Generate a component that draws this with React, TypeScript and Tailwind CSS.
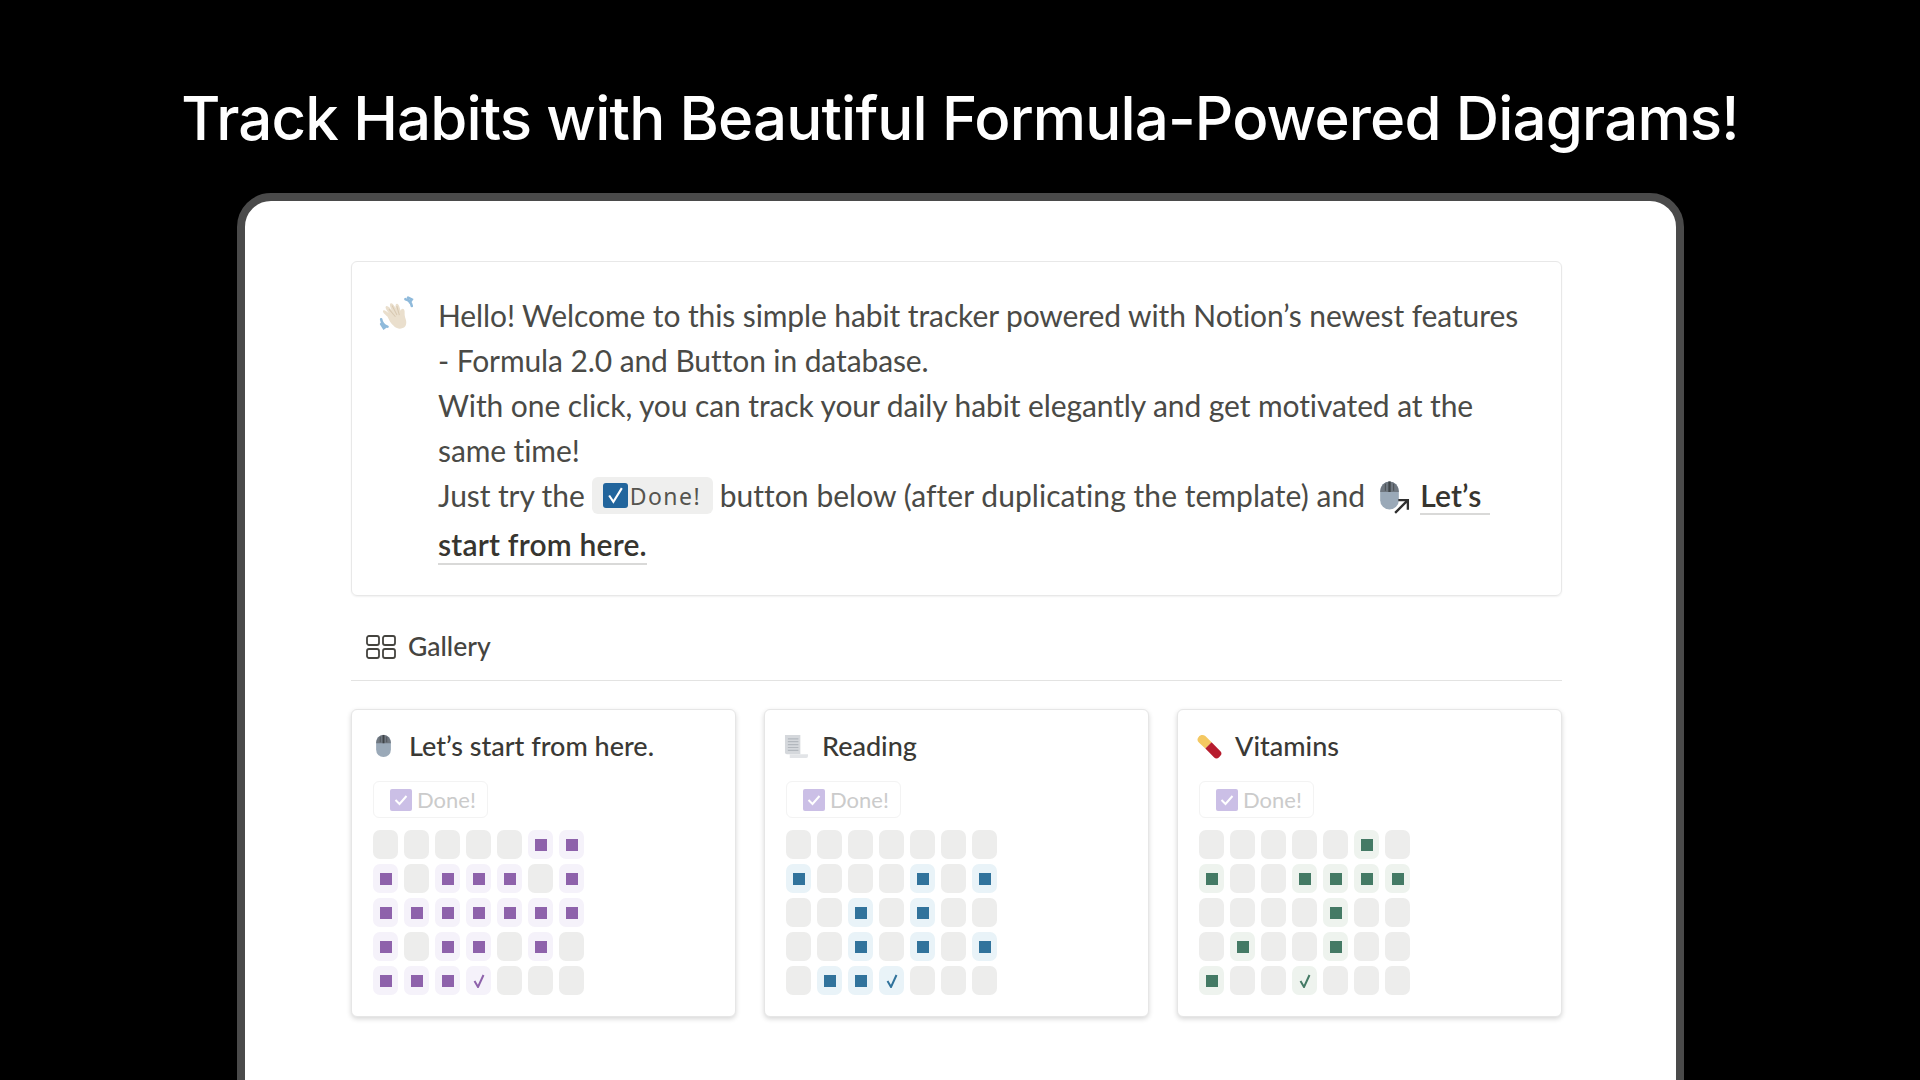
type Habit = {
  title: string;
  titleGap: string;
  icon: React.ReactNode;
  dot: string;
  tint: string;
  check: string;
  rows: string[];
};

const HandIcon = () => (
  <svg viewBox="0 0 36 36" className="h-[38px] w-[38px]">
    <g transform="rotate(-22 18 18)">
      <path
        d="M9 16c-1.500-3-3-6-1.500-6.800 1.300-.5 2.800 2.300 4 4.500-.8-3.200-1.800-6.700 0-7.200 1.700-.4 2.800 2.800 3.500 5.500 0-3.200-.2-6.500 1.700-6.500 1.800 0 2.300 3.300 2.500 6 .6-2.200 1.500-4 2.900-3.400 1.500.6.900 4.400.6 7.400 1-1.200 2.800-1.800 3.400 0 .6 2.200-1.700 4.500-1.800 7.500 0 4.500-1.500 8.500-6 8.500-5.300 0-7.300-4.500-8.800-10z"
        fill="#eadfcd"
      />
      <path d="M13 10l3 9M17 8l1 10M21 10l-1 9" stroke="#d8c9b2" strokeWidth="1" fill="none" />
    </g>
    <path
      d="M26 3c3 .8 5.500 3 6 6.500M28.500 1.500l3.500 1.800-1.800 2.700M3 22c.5 3.500 2.500 6 6 7M3 26.500l2.500 4 2.500-1.800"
      stroke="#8fbadb"
      strokeWidth="2.400"
      fill="none"
      strokeLinecap="round"
    />
  </svg>
);

const MouseIcon = ({ className }: { className: string }) => (
  <svg viewBox="0 0 18 26" className={className}>
    <rect x="1" y="1" width="16" height="24" rx="8" fill="#9aa9b8" />
    <path d="M1 10a8 9 0 0 1 16 0z" fill="#6f7780" />
    <path d="M9 1v9" stroke="#3f4448" strokeWidth="2" />
    <path d="M5.500 3v6M12.500 3v6" stroke="#4f555a" strokeWidth="1" />
  </svg>
);

const ScrollIcon = () => (
  <svg viewBox="0 0 26 26" className="h-[25px] w-[25px]">
    <path d="M1 1h16v20H3a2 2 0 0 1-2-2z" fill="#d5d8dc" />
    <path d="M6 21h19v2a2 2 0 0 1-2 2H6z" fill="#e2e4e7" />
    <path d="M4 5h11M4 8h11M4 11h11M4 14h11M4 17h11" stroke="#b3b8be" strokeWidth="1.200" />
  </svg>
);

const PillIcon = () => (
  <svg viewBox="0 0 26 26" className="h-[27px] w-[27px]">
    <path d="M2 4.500a4.500 4.500 0 0 1 7-1.500l6 6-6 6-6-5.500A4 4 0 0 1 2 4.500z" fill="#f4c862" />
    <path d="M15 9l8.500 8.500a3 3 0 0 1 0 4.500L22 23.500a3 3 0 0 1-4.500 0L9 15z" fill="#b71c2e" />
  </svg>
);

const habits: Habit[] = [
  {
    title: "Let’s start from here.",
    titleGap: "gap-[17px] pl-[23px]",
    icon: <MouseIcon className="h-[24px] w-[17px]" />,
    dot: "bg-[#8e62ab]",
    tint: "bg-[#f5f2fa]",
    check: "#8e62ab",
    rows: ["0000011", "1011101", "1111111", "1011010", "1112000"],
  },
  {
    title: "Reading",
    titleGap: "gap-[13px] pl-[19px]",
    icon: <ScrollIcon />,
    dot: "bg-[#31739c]",
    tint: "bg-[#e9f3f8]",
    check: "#31739c",
    rows: ["0000000", "1000101", "0010100", "0010101", "0112000"],
  },
  {
    title: "Vitamins",
    titleGap: "gap-[12px] pl-[18px]",
    icon: <PillIcon />,
    dot: "bg-[#447a65]",
    tint: "bg-[#eef3ee]",
    check: "#447a65",
    rows: ["0000010", "1001111", "0000100", "0100100", "1002000"],
  },
];

const Cell = ({ value, habit }: { value: string; habit: Habit }) => {
  if (value === "0") return <div className="h-[29px] w-[25px] rounded-[7px] bg-[#ededec]" />;
  return (
    <div className={`flex h-[29px] w-[25px] items-center justify-center rounded-[7px] ${habit.tint}`}>
      {value === "1" ? (
        <div className={`h-[12px] w-[12px] ${habit.dot}`} />
      ) : (
        <svg viewBox="0 0 12 14" className="h-[14px] w-[12px]">
          <path d="M1.500 7l3.500 6L10.500 1" stroke={habit.check} strokeWidth="2" fill="none" />
        </svg>
      )}
    </div>
  );
};

const HabitCard = ({ habit }: { habit: Habit }) => (
  <div className="h-[308px] rounded-[6px] border border-[#e6e6e6] bg-white shadow-[0_2px_5px_rgba(0,0,0,0.16)]">
    <div className={`mt-[23px] flex h-[26px] items-center ${habit.titleGap}`}>
      {habit.icon}
      <span className="text-[27px] font-medium leading-[26px] text-[#3a3935]">{habit.title}</span>
    </div>
    <div className="ml-[21px] mt-[22px] flex h-[37px] w-[115px] items-center gap-[5px] rounded-[6px] border border-[#f3f3f3] pl-[16px]">
      <span className="flex h-[22px] w-[22px] items-center justify-center rounded-[2px] bg-[#cbbfe6]">
        <svg viewBox="0 0 16 16" className="h-[16px] w-[16px]">
          <path d="M2.500 8l4 4 7-8" stroke="#fff" strokeWidth="2" fill="none" />
        </svg>
      </span>
      <span className="text-[22px] leading-[26px] text-[#cbcbcb]">Done!</span>
    </div>
    <div className="ml-[21px] mt-[12px] grid w-fit grid-cols-[repeat(7,25px)] gap-x-[6px] gap-y-[5px]">
      {habit.rows.map((row, r) =>
        row.split("").map((value, c) => <Cell key={`${r}-${c}`} value={value} habit={habit} />),
      )}
    </div>
  </div>
);

export default function App() {
  return (
    <div className="h-screen overflow-hidden bg-black font-['Lato','Noto_Sans',sans-serif]">
      <h1 className="pt-[81px] text-center font-['Inter',sans-serif] text-[60px] font-medium leading-[74px] tracking-[-0.85px] text-white">
        Track Habits with Beautiful Formula-Powered Diagrams!
      </h1>
      <div className="ml-[237px] mr-[236px] mt-[38px] h-[900px] rounded-t-[34px] border-8 border-[#4a4a4a] bg-white pl-[106px] pr-[114px] pt-[60px]">
        <div className="flex h-[335px] rounded-[6px] border border-[#e8e8e8] pl-[26px] pt-[31px] shadow-[0_1px_2px_rgba(0,0,0,0.06)]">
          <div className="mr-[26px] mt-[3px] h-[36px] w-[34px] shrink-0">
            <HandIcon />
          </div>
          <div className="whitespace-nowrap text-[30px] leading-[45px] tracking-[-0.1px] text-[#4a4a46]">
            <div>Hello! Welcome to this simple habit tracker powered with Notion’s newest features</div>
            <div>- Formula 2.0 and Button in database.</div>
            <div>With one click, you can track your daily habit elegantly and get motivated at the</div>
            <div>same time!</div>
            <div className="flex items-center">
              Just try the
              <span className="mx-[7px] flex h-[37px] w-[121px] items-center rounded-[6px] bg-[#efefee] pl-[11px]">
                <span className="flex h-[25px] w-[25px] items-center justify-center rounded-[3px] bg-[#22659c]">
                  <svg viewBox="0 0 18 18" className="h-[19px] w-[19px]">
                    <path d="M3 9l4 6L15 2" stroke="#fff" strokeWidth="2" fill="none" />
                  </svg>
                </span>
                <span className="ml-[2px] font-['Noto_Sans',sans-serif] text-[23px] leading-[30px] tracking-[1.500px] text-[#55544f]">
                  Done!
                </span>
              </span>
              <span className="tracking-[0.05px]">button below (after duplicating the template) and</span>
              <span className="relative ml-[14px] mr-[13px] h-[34px] w-[28px]">
                <MouseIcon className="h-[33px] w-[21px]" />
                <svg viewBox="0 0 16 16" className="absolute bottom-[-2px] right-[-3px] h-[17px] w-[17px]">
                  <path d="M2 14L14 2M5 2h9v9" stroke="#2f2f2f" strokeWidth="2.200" fill="none" />
                </svg>
              </span>
              <span className="border-b-2 border-[#d9d9d8] pr-[9px] font-semibold leading-[36px] tracking-[0.2px] text-[#37352f]">
                Let’s
              </span>
            </div>
            <div className="mt-[4px]">
              <span className="border-b-2 border-[#d9d9d8] pb-[1px] font-semibold tracking-[0.2px] text-[#37352f]">
                start from here.
              </span>
            </div>
          </div>
        </div>
        <div className="flex h-[85px] items-center gap-[12px] border-b border-[#e3e3e2] pl-[15px] pt-[17px]">
          <svg viewBox="0 0 30 24" className="h-[24px] w-[30px]" fill="none" stroke="#45443f" strokeWidth="1.800">
            <rect x="1" y="1" width="12" height="9" rx="2" />
            <rect x="17" y="1" width="12" height="9" rx="2" />
            <rect x="1" y="14" width="12" height="9" rx="2" />
            <rect x="17" y="14" width="12" height="9" rx="2" />
          </svg>
          <span className="text-[26.500px] font-medium text-[#45443f]">Gallery</span>
        </div>
        <div className="mt-[28px] grid grid-cols-3 gap-[28px]">
          {habits.map((habit) => (
            <HabitCard key={habit.title} habit={habit} />
          ))}
        </div>
      </div>
    </div>
  );
}
